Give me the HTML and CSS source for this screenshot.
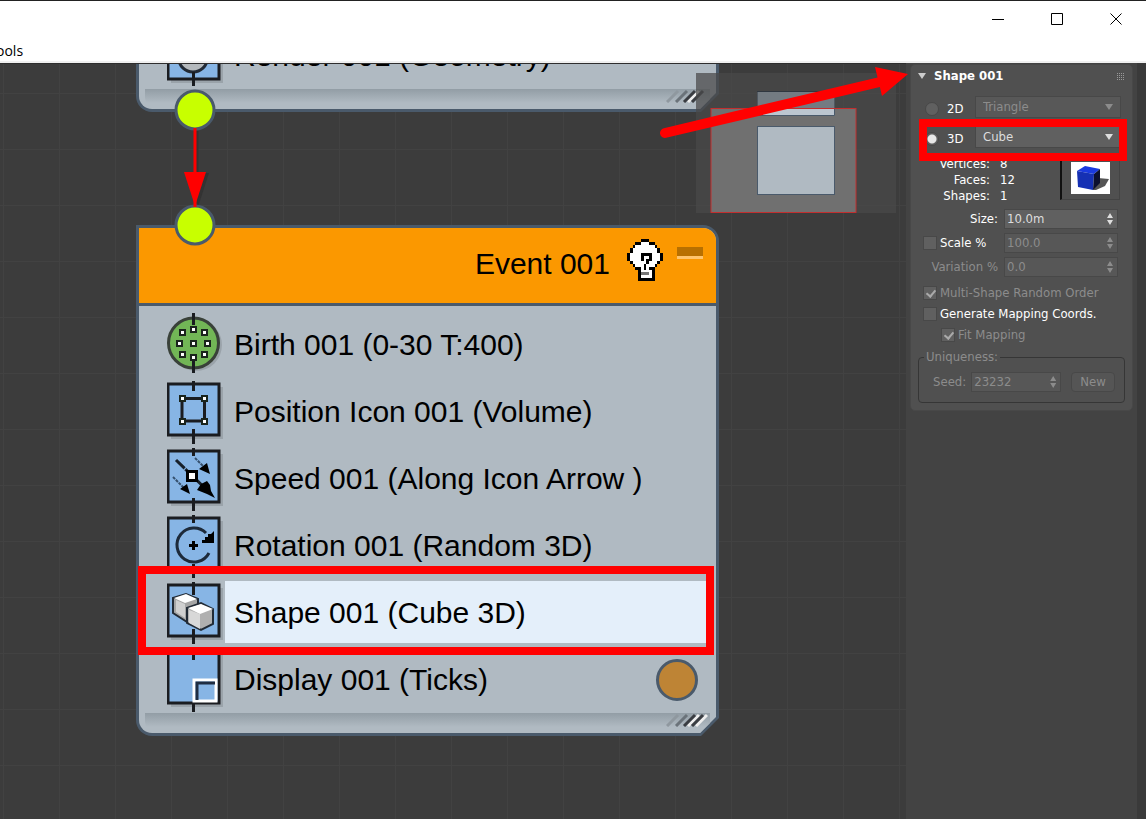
FILE: index.html
```html
<!DOCTYPE html>
<html lang="en">
<head>
    <meta charset="UTF-8">
    <title>Particle View</title>
    <link rel="stylesheet" href="styles.css">
</head>
<body>

    <!-- Title bar and menu -->
    <header class="topbar">
        <div class="window-controls">
            <button type="button" aria-label="Minimize">
                <svg width="13" height="13" viewBox="0 0 13 13"><path d="M0 6.5h12"/></svg>
            </button>
            <button type="button" aria-label="Maximize">
                <svg width="13" height="13" viewBox="0 0 13 13"><path d="M.5 .5h11v11h-11z"/></svg>
            </button>
            <button type="button" aria-label="Close">
                <svg width="13" height="13" viewBox="0 0 13 13"><path d="M.5 .5l11 11M11.5 .5l-11 11"/></svg>
            </button>
        </div>
        <nav class="menu">
            <button type="button">ools</button>
        </nav>
    </header>

    <main class="workspace">

        <!-- Event graph -->
        <section class="canvas">

            <article class="node node-render">
                <div class="node-inner">
                    <ul class="operators">
                        <li>
                            <svg class="op-icon" viewBox="0 0 57 67">
                                <rect class="shade" x="4" y="10" width="52" height="52"/>
                                <rect class="tile" x="1" y="7" width="51" height="51"/>
                                <ellipse cx="26" cy="38" rx="14" ry="13" fill="#b4b9bd" stroke="#222a35" stroke-width="3"/>
                                <path class="tick" d="M26.500 51v14"/>
                            </svg>
                            <span class="op-name">Render 001 (Geometry)</span>
                        </li>
                    </ul>
                    <div class="node-foot">
                        <svg class="grip" width="42" height="14" viewBox="0 0 42 14">
                            <path d="M1 13L12 2" stroke="#8f989f"/><path d="M10 13L21 2" stroke="#6b737a"/>
                            <path d="M22 13L33 2" stroke="#eee"/><path d="M18 13L29 2M26 13L37 2" stroke="#3a3d42"/>
                        </svg>
                    </div>
                </div>
            </article>

            <article class="node node-event">
                <div class="node-inner">
                    <header class="node-head">
                        <h2>Event 001</h2>
                        <svg class="bulb" viewBox="0 0 13 15" shape-rendering="crispEdges">
                            <path fill="#fff" d="M5 1h3v1h2v1h1v2h1v3h-1v1h-1v1h-1v4h-4v-4h-2v-1h-1v-1h-1v-3h1v-2h1v-1h2z"/>
                            <path d="M5 0h3v1h-3zM3 1h2v1h-2zM8 1h2v1h-2zM2 2h1v1h-1zM10 2h1v1h-1zM1 3h1v2h-1zM11 3h1v2h-1zM0 5h1v3h-1zM12 5h1v3h-1zM1 8h1v1h-1zM11 8h1v1h-1zM2 9h1v1h-1zM10 9h1v1h-1zM3 10h2v1h-2zM8 10h2v1h-2zM4 11h1v4h-1zM9 11h1v4h-1zM5 14h4v1h-4z"/>
                            <path d="M5 5h4v1h-4zM5 6h1v2h-1zM8 6h1v2h-1zM7 7h1v2h-1zM6 9h1v2h-1z"/>
                            <path fill="#777" d="M5 12h3v1h-3z"/>
                        </svg>
                        <button class="collapse" type="button" aria-label="Collapse"></button>
                    </header>
                    <ul class="operators">
                        <li>
                            <svg class="op-icon" viewBox="0 0 57 67">
                                <circle class="shade" cx="29" cy="35" r="26"/>
                                <circle cx="26.500" cy="33" r="25" fill="#72b656" stroke="#394139" stroke-width="3"/>
                                <path class="tick" d="M26.500 3v12M26.500 50v13"/>
                                <g class="dots">
                                    <rect x="13" y="20" width="5" height="5"/><rect x="24" y="17" width="5" height="5"/><rect x="35" y="20" width="5" height="5"/>
                                    <rect x="10" y="31" width="5" height="5"/><rect x="24" y="31" width="5" height="5"/><rect x="38" y="31" width="5" height="5"/>
                                    <rect x="13" y="42" width="5" height="5"/><rect x="24" y="45" width="5" height="5"/><rect x="35" y="42" width="5" height="5"/>
                                </g>
                            </svg>
                            <span class="op-name">Birth 001 (0-30 T:400)</span>
                        </li>
                        <li>
                            <svg class="op-icon" viewBox="0 0 57 67">
                                <rect class="shade" x="4" y="10" width="52" height="52"/>
                                <rect class="tile" x="1" y="7" width="51" height="51"/>
                                <path class="tick" d="M26.500 4v10M26.500 52v15M15 21.500h22.500v22.500h-22.500z"/>
                                <g class="dots">
                                    <rect x="13" y="19" width="5" height="5"/><rect x="35" y="19" width="5" height="5"/>
                                    <rect x="13" y="42" width="5" height="5"/><rect x="35" y="42" width="5" height="5"/>
                                </g>
                            </svg>
                            <span class="op-name">Position Icon 001 (Volume)</span>
                        </li>
                        <li>
                            <svg class="op-icon" viewBox="0 0 57 67">
                                <rect class="shade" x="4" y="10" width="52" height="52"/>
                                <rect class="tile" x="1" y="7" width="51" height="51"/>
                                <path class="tick" d="M26.500 4v8M26.500 54v13"/>
                                <path d="M9 16l34 33" stroke="#17202b" stroke-width="3" stroke-dasharray="12 1"/>
                                <path d="M28 14l12 12M6 33l14 14" stroke="#35506d" stroke-width="2" stroke-dasharray="3 1"/>
                                <path d="M30 46l4-6 6-3 3 4 1 6 4 7-8-4zM32 25l8-6 3 11zM13 45l7-5 3 10z"/>
                                <rect x="20.500" y="27.500" width="9" height="9" fill="#fff" stroke="#000" stroke-width="3"/>
                            </svg>
                            <span class="op-name">Speed 001 (Along Icon Arrow )</span>
                        </li>
                        <li>
                            <svg class="op-icon" viewBox="0 0 57 67">
                                <rect class="shade" x="4" y="10" width="52" height="52"/>
                                <rect class="tile" x="1" y="7" width="51" height="51"/>
                                <path class="tick" d="M26.500 4v8M26.500 53v14"/>
                                <path d="M42 42A17 17 0 1 1 39 22" fill="none" stroke="#1d2a3a" stroke-width="3"/>
                                <path d="M47 20v12h-12v-3h3v-3h3v-3h3zM25 30h3v3h3v3h-3v3h-3v-3h-3v-3h3z"/>
                            </svg>
                            <span class="op-name">Rotation 001 (Random 3D)</span>
                        </li>
                        <li class="selected">
                            <svg class="op-icon" viewBox="0 0 57 67">
                                <rect class="shade" x="4" y="10" width="52" height="52"/>
                                <rect class="tile" x="1" y="7" width="51" height="51"/>
                                <path class="tick" d="M26.500 4v13M26.500 51v15"/>
                                <path d="M6 20l13-4 12 5v9l-11 14-14-9z" fill="#a5a5a5" stroke="#222b36" stroke-width="2"/>
                                <path d="M7 20l12-4 11 5-12 4z" fill="#fff"/>
                                <path d="M9 22l9 4v14l-9-6z" fill="#d0d0d0"/>
                                <path d="M20 30l14-5 12 6v15l-12 6-14-7z" fill="#b0b0b0" stroke="#222b36" stroke-width="2"/>
                                <path d="M21 30l13-4 12 5-13 5z" fill="#fff"/>
                                <path d="M22 32l11 4v15l-11-6z" fill="#d8d8d8"/>
                            </svg>
                            <span class="op-name">Shape 001 (Cube 3D)</span>
                        </li>
                        <li>
                            <svg class="op-icon" viewBox="0 0 57 67">
                                <rect class="shade" x="4" y="10" width="52" height="52"/>
                                <rect class="tile" x="1" y="7" width="51" height="51"/>
                                <path class="tick" d="M26.500 4v11M26.500 59v8"/>
                                <rect x="27" y="35" width="22" height="21" fill="#87b5e5" stroke="#fff" stroke-width="3"/>
                                <path d="M30 55V38h18" fill="none" stroke="#1f2d42" stroke-width="3"/>
                            </svg>
                            <span class="op-name">Display 001 (Ticks)</span>
                            <span class="display-color"></span>
                        </li>
                    </ul>
                    <div class="node-foot">
                        <svg class="grip" width="42" height="14" viewBox="0 0 42 14">
                            <path d="M1 13L12 2" stroke="#8f989f"/><path d="M10 13L21 2" stroke="#6b737a"/>
                            <path d="M22 13L33 2M30 13L41 2" stroke="#eee"/><path d="M18 13L29 2M26 13L37 2" stroke="#3a3d42"/>
                        </svg>
                    </div>
                </div>
            </article>

            <!-- Wire between the two events -->
            <svg class="wire" viewBox="0 0 44 158">
                <path d="M24 42v72" stroke="#333" stroke-width="3"/>
                <path d="M14 84h22l-11 34z" fill="#333"/>
                <circle class="port" cx="22" cy="21" r="19"/>
                <circle class="port" cx="22" cy="136" r="19"/>
                <path d="M22 39v79" stroke="#f00" stroke-width="3"/>
                <path d="M11 83h22l-11 34z" fill="#f00"/>
            </svg>

            <div class="mark mark-operator"></div>

            <!-- Navigator -->
            <svg class="navigator" viewBox="0 0 200 140">
                <rect width="200" height="140" fill="#484848" fill-opacity=".73"/>
                <rect x="61.500" y="18.500" width="77" height="24" fill="#737b82" stroke="#2f3740"/>
                <rect x="15" y="35.500" width="145" height="104" fill="#707070" stroke="#c22f2f"/>
                <path d="M61.500 19v17h77v-17z" fill="#737b82"/>
                <path d="M61.500 36v6.500h77v-6.500" fill="#bcc6d0" stroke="#4a5a6b"/>
                <path d="M61 35.500h78" stroke="#c22f2f"/>
                <rect x="61.500" y="53.500" width="77" height="68" fill="#b0bac2" stroke="#4a5a6b"/>
            </svg>
        </section>

        <!-- Parameters rollout -->
        <aside class="panel">
            <form class="rollout">
                <h3 class="rollout-title">
                    <svg width="8" height="6" viewBox="0 0 8 6"><path d="M0 0h8l-4 6z" fill="#ccc"/></svg>
                    Shape 001
                    <span class="drag"></span>
                </h3>

                <div class="type-row off">
                    <input type="radio" name="dim" id="dim2">
                    <label for="dim2">2D</label>
                    <span class="drop">
                        <select aria-label="2D shape" disabled><option>Triangle</option></select>
                    </span>
                </div>
                <div class="type-row">
                    <input type="radio" name="dim" id="dim3" checked>
                    <label for="dim3">3D</label>
                    <span class="drop">
                        <select aria-label="3D shape"><option>Cube</option></select>
                    </span>
                </div>

                <div class="stats">
                    <dl>
                        <dt>Vertices:</dt><dd>8</dd>
                        <dt>Faces:</dt><dd>12</dd>
                        <dt>Shapes:</dt><dd>1</dd>
                    </dl>
                    <div class="preview">
                        <svg width="39" height="32" viewBox="0 0 39 32">
                            <rect width="39" height="32" fill="#fff"/>
                            <path d="M22 28l5-12 11 1-4 7-9 4z" fill="#555"/>
                            <path d="M6 9l8-5 15 3-6 5z" fill="#1a3ae0"/>
                            <path d="M6 9l17 3-1 16-15-3z" fill="#1530b4"/>
                            <path d="M23 12l6-5v14l-7 7z" fill="#0c1030"/>
                        </svg>
                    </div>
                </div>

                <div class="field">
                    <label for="size">Size:</label>
                    <span class="spin"><input type="text" id="size" value="10.0m"><i></i></span>
                </div>
                <div class="field">
                    <label class="check"><input type="checkbox">Scale %</label>
                    <span class="spin off"><input type="text" aria-label="Scale" value="100.0" disabled><i></i></span>
                </div>
                <div class="field">
                    <label class="dim" for="variation">Variation %</label>
                    <span class="spin off"><input type="text" id="variation" value="0.0" disabled><i></i></span>
                </div>

                <div class="checks">
                    <label class="check dim"><input type="checkbox" checked disabled>Multi-Shape Random Order</label>
                    <label class="check"><input type="checkbox">Generate Mapping Coords.</label>
                    <label class="check dim nested"><input type="checkbox" checked disabled>Fit Mapping</label>
                </div>

                <fieldset class="unique">
                    <legend>Uniqueness:</legend>
                    <div class="seed">
                        <label for="seed">Seed:</label>
                        <span class="spin off"><input type="text" id="seed" value="23232" disabled><i></i></span>
                        <button type="button" disabled>New</button>
                    </div>
                </fieldset>

                <div class="mark mark-type"></div>
            </form>
        </aside>

        <!-- Callout arrow -->
        <svg class="callout" viewBox="0 0 250 76">
            <path d="M7 69L226 17" stroke="#f00" stroke-width="10" stroke-linecap="round"/>
            <path d="M217 3l33 7-26 22z" fill="#f00"/>
        </svg>
    </main>

</body>
</html>
```
FILE: styles.css
```css
* {
    box-sizing: border-box;
}
body {
    margin: 0;
    min-height: 100vh;
    display: flex;
    flex-direction: column;
    background: #3c3c3c;
    font-family: "Liberation Sans", Arial, sans-serif;
    overflow-x: hidden;
}
button, input, select {
    font: inherit;
    color: inherit;
    margin: 0;
}
ul, dl, dd, h2, h3 {
    margin: 0;
    padding: 0;
}

/* top bar */
.topbar {
    background: #fff;
    border-top: 1px solid #222;
    border-bottom: 2px solid #f0f0f0;
}
.window-controls {
    display: flex;
    justify-content: flex-end;
    height: 36px;
}
.window-controls button {
    width: 59px;
    padding: 0;
    border: none;
    background: none;
    display: flex;
    align-items: center;
    justify-content: center;
}
.window-controls path {
    fill: none;
    stroke: #000;
}
.menu button {
    display: block;
    margin-left: -4px;
    padding: 3px 0 0;
    border: none;
    background: none;
    height: 24px;
    font-family: "Open Sans", sans-serif;
    font-size: 14px;
    line-height: 21px;
}

.workspace {
    flex: 1;
    display: flex;
    position: relative;
}

/* event graph */
.canvas {
    flex: 1;
    position: relative;
    overflow: hidden;
    border-top: 1px solid #2e2e2e;
    background-color: #3c3c3c;
    background-image:
        linear-gradient(#424242 1px, transparent 1px),
        linear-gradient(90deg, #424242 1px, transparent 1px);
    background-size: 56px 56px;
    background-position: 3px 29px;
}
.node {
    position: absolute;
    left: 136px;
    width: 583px;
    padding: 3px;
    background: #4a5a6b;
    border-radius: 0 16px 0 16px;
    clip-path: polygon(0 0, 100% 0, 100% calc(100% - 18px), calc(100% - 18px) 100%, 0 100%);
}
.node-render {
    top: -50px;
}
.node-event {
    top: 161px;
}
.node-inner {
    background: #b0bac2;
    border-radius: 0 13px 0 13px;
    overflow: hidden;
    clip-path: polygon(0 0, 100% 0, 100% calc(100% - 16px), calc(100% - 16px) 100%, 0 100%);
}
.node-head {
    display: flex;
    align-items: flex-start;
    height: 78px;
    padding: 11px 13px 0 0;
    background: #fb9800;
    border-bottom: 3px solid #4a5a6b;
}
.node-head h2 {
    margin-left: auto;
    font-size: 30px;
    font-weight: normal;
    line-height: 50px;
}
.bulb {
    width: 36px;
    height: 42px;
    margin: 0 14px 0 17px;
}
.collapse {
    width: 26px;
    height: 12px;
    margin-top: 8px;
    padding: 0;
    border: none;
    border-bottom: 3px solid #ffc46b;
    background: #b87000;
}
.operators {
    list-style: none;
    padding: 4px 5px 0 28px;
}
.operators li {
    display: flex;
    align-items: center;
    height: 67px;
}
.op-icon {
    width: 57px;
    height: 67px;
    flex: none;
}
.op-icon .tile {
    fill: #87b5e5;
    stroke: #1a1c20;
    stroke-width: 3;
}
.op-icon .shade {
    fill: #000;
    opacity: .12;
}
.op-icon .tick {
    fill: none;
    stroke: #1a1c20;
    stroke-width: 3;
}
.op-icon .dots rect {
    fill: #fff;
    stroke: #1a241c;
    stroke-width: 2;
}
.op-name {
    flex: 1;
    padding: 2px 0 0 9px;
    margin-left: 1px;
    font-size: 30px;
    line-height: 60px;
    white-space: nowrap;
}
.selected .op-name {
    background: #e4effa;
}
.display-color {
    width: 42px;
    height: 42px;
    margin: 3px 13px 0 0;
    border: 3px solid #4a5a6b;
    border-radius: 50%;
    background: #be8435;
}
.node-foot {
    display: flex;
    justify-content: flex-end;
    height: 20px;
    margin: 1px 6px 0;
    padding-right: 2px;
    border-radius: 0 0 0 12px;
    background: linear-gradient(#929da5, #b0bac2 14px);
}
.grip path {
    stroke-width: 3;
}
.wire {
    position: absolute;
    left: 173px;
    top: 25px;
    width: 44px;
    height: 158px;
}
.port {
    fill: #c8ff00;
    stroke: #4a5a6b;
    stroke-width: 3;
}
.navigator {
    position: absolute;
    right: 10px;
    top: 9px;
    width: 200px;
    height: 140px;
}

/* red highlights */
.mark {
    position: absolute;
    border: 8px solid #f00;
    pointer-events: none;
}
.mark-operator {
    left: 138px;
    top: 502px;
    width: 576px;
    height: 89px;
}
.mark-type {
    left: 8px;
    top: 54px;
    right: 5px;
    height: 42px;
}
.callout {
    position: absolute;
    right: 238px;
    top: 1px;
    width: 250px;
    height: 76px;
}

/* parameters */
.panel {
    width: 240px;
    padding: 1px 4px 0 4px;
    background: #434343;
    border-right: 9px solid #3a3a3a;
    font-family: "DejaVu Sans Condensed", "DejaVu Sans", sans-serif;
    font-size: 13px;
    line-height: 16px;
    color: #fff;
}
.rollout {
    position: relative;
    padding: 2px 7px 7px;
    border: 1px solid #484848;
    border-radius: 5px;
    background: #505050;
}
.rollout-title {
    display: flex;
    align-items: center;
    gap: 8px;
    height: 17px;
    font-size: 13px;
}
.drag {
    width: 8px;
    height: 8px;
    margin-left: auto;
    background: repeating-linear-gradient(#505050 0 1px, transparent 1px 2px), repeating-linear-gradient(90deg, #999 0 1px, #505050 1px 2px);
}
.type-row {
    display: flex;
    align-items: center;
    height: 22px;
    margin: 12px 4px 0 7px;
}
.type-row + .type-row {
    margin-top: 8px;
}
input[type="radio"] {
    appearance: none;
    width: 14px;
    height: 14px;
    margin-top: 3px;
    border: 1px solid #484848;
    border-radius: 50%;
    background: #606060;
}
input[type="radio"]:checked {
    background: radial-gradient(#e8e8e8 4px, #606060 5px);
}
.type-row label {
    width: 28px;
    margin-left: 8px;
    padding-top: 4px;
}
.drop {
    flex: 1;
    position: relative;
}
.drop::after {
    content: "";
    position: absolute;
    right: 8px;
    top: 8px;
    border: 4px solid transparent;
    border-top: 6px solid #ddd;
    border-bottom: none;
    pointer-events: none;
}
.off .drop::after {
    border-top-color: #8c8c8c;
}
select {
    appearance: none;
    display: block;
    width: 100%;
    height: 22px;
    padding: 0 7px;
    border: 1px solid #484848;
    border-radius: 0;
    background: #606060;
    color: #ddd;
}
select:disabled {
    background: #585858;
    color: #8c8c8c;
    opacity: 1;
}
.stats {
    display: flex;
    justify-content: space-between;
    margin: 8px 5px 3px 0;
}
.stats dl {
    display: grid;
    grid-template-columns: 72px auto;
    column-gap: 10px;
}
.stats dt {
    text-align: right;
}
.preview {
    display: flex;
    align-items: flex-end;
    justify-content: center;
    width: 60px;
    height: 44px;
    padding-bottom: 5px;
    border: 1px solid #444;
    border-left: 2px solid #111;
}
.field {
    display: flex;
    align-items: center;
    justify-content: flex-end;
    height: 24px;
    padding-right: 7px;
}
.field > label {
    flex: 1;
    padding-right: 6px;
    text-align: right;
    white-space: nowrap;
}
.field > .check {
    text-align: left;
}
.spin {
    display: flex;
    align-items: center;
    width: 114px;
    height: 20px;
    padding-right: 4px;
    border: 1px solid #484848;
    background: #606060;
    color: #ddd;
}
.spin input {
    flex: 1;
    min-width: 0;
    padding: 0 2px;
    border: none;
    background: none;
}
.spin i {
    width: 6px;
    height: 12px;
    background: currentColor;
    clip-path: polygon(50% 0, 100% 42%, 0 42%, 0 58%, 100% 58%, 50% 100%, 0 58%, 0 42%);
}
.spin.off {
    background: #575757;
    color: #8c8c8c;
}
.check {
    display: flex;
    align-items: center;
    gap: 3px;
    padding-left: 5px;
}
input[type="checkbox"] {
    appearance: none;
    width: 14px;
    height: 14px;
    flex: none;
    border: 1px solid #484848;
    background: #606060;
}
input[type="checkbox"]:checked::after {
    content: "";
    display: block;
    width: 4px;
    height: 7px;
    margin: 1px 0 0 4px;
    border: solid #aaa;
    border-width: 0 2px 2px 0;
    transform: rotate(40deg);
}
.dim {
    color: #8c8c8c;
}
.checks {
    display: flex;
    flex-direction: column;
    gap: 5px;
    margin-top: 6px;
}
.nested {
    padding-left: 23px;
}
.unique {
    margin: 6px 0 0;
    padding: 0 9px 10px 14px;
    border: 1px solid #363636;
    border-radius: 4px;
    color: #8c8c8c;
}
.unique legend {
    margin-left: -9px;
    padding: 0 2px;
}
.seed {
    display: flex;
    align-items: center;
    gap: 5px;
    padding-top: 7px;
}
.seed .spin {
    width: 90px;
}
.seed button {
    width: 44px;
    height: 20px;
    margin-left: auto;
    padding: 0;
    border: 1px solid #484848;
    border-radius: 4px;
    background: #555;
}
```
